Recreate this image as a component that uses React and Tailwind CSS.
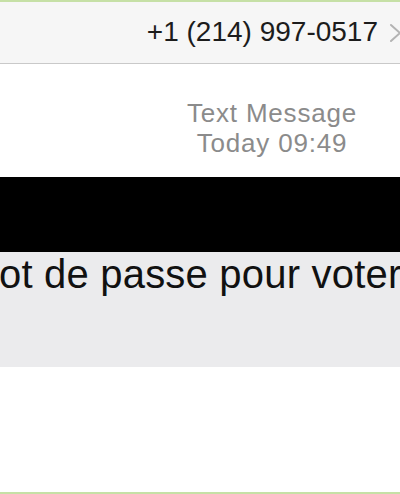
export default function App() {
    return (
        <div
            className="flex h-[494px] w-[400px] flex-col overflow-hidden bg-white"
            style={{ fontFamily: '"Liberation Sans", Arial, sans-serif' }}
        >
            <div className="h-[2px] shrink-0 bg-[#c6e0a6]" />
            <div className="flex h-[62px] shrink-0 items-center justify-end gap-[11px] border-b border-[#c9c9c9] bg-[#f6f6f6]">
                <span className="pb-[2px] text-[28px] leading-none text-[#1c1c1c]">
                    +1 (214) 997-0517
                </span>
                <svg
                    width="14"
                    height="20"
                    viewBox="0 0 14 20"
                    className="-mr-[3px] shrink-0"
                >
                    <path
                        d="M2 2 L11 10 L2 18"
                        fill="none"
                        stroke="#b3b3b3"
                        strokeWidth="2"
                        strokeLinecap="round"
                    />
                </svg>
            </div>

            <div className="flex flex-col items-center pl-[144px] pt-[34px] text-[26px] leading-[30px] tracking-[0.8px] text-[#8b8b8b]">
                <span>Text Message</span>
                <span>Today 09:49</span>
            </div>

            <div className="mt-[19px] h-[75px] shrink-0 bg-black" />
            <div className="h-[115px] shrink-0 bg-[#ebebed]">
                <p className="-ml-[1px] whitespace-nowrap pt-[2px] text-[40px] leading-[40px] tracking-[0.2px] text-[#111]">
                    ot de passe pour voter
                </p>
            </div>

            <div className="flex-1" />
            <div className="h-[2px] shrink-0 bg-[#c6e0a6]" />
        </div>
    );
}
